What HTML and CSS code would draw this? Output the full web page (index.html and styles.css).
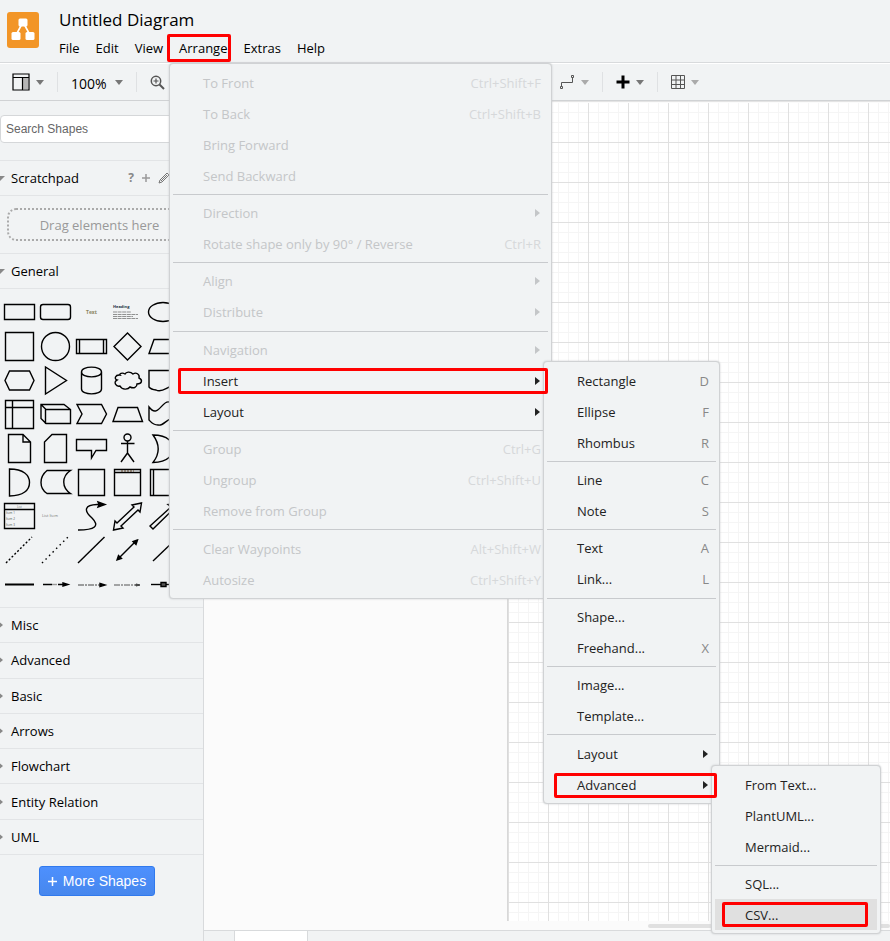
FILE: index.html
```html
<!DOCTYPE html>
<html lang="en">
<head>
<meta charset="utf-8">
<title>Untitled Diagram</title>
<link rel="stylesheet" href="styles.css">
</head>
<body>
<div class="app">
  <header class="header">
    <svg class="logo" viewBox="0 0 32 36" aria-hidden="true">
      <rect width="32" height="36" rx="3" fill="#f29527"/>
      <path d="M15.500 11 9 23M16.500 11 23 23" stroke="#fff" stroke-width="1.600"/>
      <rect x="11.500" y="6.500" width="9" height="8" rx="1.500" fill="#fff"/>
      <rect x="4.500" y="20" width="9" height="8" rx="1.500" fill="#fff"/>
      <rect x="18.500" y="20" width="9" height="8" rx="1.500" fill="#fff"/>
    </svg>
    <div class="heading">
      <h1 class="title">Untitled Diagram</h1>
      <nav class="menubar">
        <button>File</button><button>Edit</button><button>View</button><button>Arrange</button><button>Extras</button><button>Help</button>
      </nav>
    </div>
  </header>

  <div class="toolbar">
    <button class="tool" aria-label="View"><svg width="18" height="18" viewBox="0 0 18 18"><path d="M11 5h5v11h-5z" fill="#b5b5b5"/><path d="M1 1h16v16H1zM1 4.500h16M10.500 4.500V17" fill="none" stroke="#000" stroke-width="1.200"/></svg><i class="caret"></i></button>
    <i class="divider"></i>
    <button class="tool zoom"><span>100%</span><i class="caret"></i></button>
    <i class="divider"></i>
    <button class="tool" aria-label="Zoom in"><svg width="15" height="15" viewBox="0 0 15 15" fill="none" stroke="#555"><circle cx="6" cy="6" r="4.700" stroke-width="1.500"/><path d="M6 3.500v5M3.500 6h5" stroke-width="1.200"/><path d="m9.500 9.500 4.500 4.500" stroke-width="2"/></svg></button>
    <span class="tool-gap"></span>
    <button class="tool light" aria-label="Waypoints"><svg width="16" height="16" viewBox="0 0 16 16" fill="none" stroke="#555"><path d="M2.500 12V8.500h11V4"/><path d="M1.500 12.500h2v2h-2zM12.500 1.500h2v2h-2z"/></svg><i class="caret"></i></button>
    <i class="divider"></i>
    <button class="tool" aria-label="Insert"><svg width="14" height="14" viewBox="0 0 14 14"><path d="M7 .5v13M.5 7h13" stroke="#000" stroke-width="3"/></svg><i class="caret"></i></button>
    <i class="divider"></i>
    <button class="tool light" aria-label="Table"><svg width="14" height="14" viewBox="0 0 14 14" fill="none" stroke="#555"><path d="M.5.5h13v13H.5zM5 .5v13M9.500.5v13M.5 5h13M.5 9.500h13"/></svg><i class="caret"></i></button>
  </div>

  <div class="body">
    <aside class="sidebar">
      <div class="search"><input type="text" placeholder="Search Shapes" aria-label="Search Shapes"></div>
      <section class="panel">
        <h2 class="row down">Scratchpad
          <span class="actions"><b>?</b>
          <svg width="8" height="8" viewBox="0 0 8 8"><path d="M4 0v8M0 4h8" stroke="#999" stroke-width="1.500"/></svg>
          <svg width="12" height="12" viewBox="0 0 12 12" fill="none" stroke="#777"><path d="m1 11 1-3 7-7 2 2-7 7zM3 9l6-6"/></svg></span>
        </h2>
        <div class="scratch"><div class="drop">Drag elements here</div></div>
      </section>
      <section class="panel">
        <h2 class="row down">General</h2>
        <div class="shapes">
          <svg viewBox="0 0 36 34"><path d="M3.500 9.500h30v15h-30z"/></svg>
          <svg viewBox="0 0 36 34"><rect x="3.500" y="9.500" width="30" height="15" rx="2.500"/></svg>
          <svg viewBox="0 0 36 34"><text x="13" y="19" font-size="5" font-weight="700" fill="#8a8460">Text</text></svg>
          <svg viewBox="0 0 36 34"><text x="4" y="13" font-size="4" font-weight="700" fill="#234">Heading</text><path d="M4 17h18M4 19.500h25M4 21.500h20M4 23.500h25" stroke="#666" stroke-width=".7" stroke-dasharray="4 .6"/></svg>
          <svg viewBox="0 0 36 34"><ellipse cx="18" cy="17" rx="14.500" ry="9.500"/></svg>

          <svg viewBox="0 0 36 34"><path d="M4.500 3.500h28v28h-28z"/></svg>
          <svg viewBox="0 0 36 34"><circle cx="18.500" cy="17.500" r="14"/></svg>
          <svg viewBox="0 0 36 34"><path d="M3.500 10.500h30v14h-30zM6.500 10.500v14M30.500 10.500v14"/></svg>
          <svg viewBox="0 0 36 34"><path d="M18.500 4 32 17.500 18.500 31 5 17.500z"/></svg>
          <svg viewBox="0 0 36 34"><path d="M9 10.500h24l-5 14H4z"/></svg>

          <svg viewBox="0 0 36 34"><path d="M8.500 8h20l4.500 9.500-4.500 9.500h-20L4 17.500z"/></svg>
          <svg viewBox="0 0 36 34"><path d="M8.500 4v27l21-13.500z"/></svg>
          <svg viewBox="0 0 36 34"><path d="M8.500 9c0-6.500 20-6.500 20 0v17c0 6.500-20 6.500-20 0zM8.500 9c0 6.500 20 6.500 20 0"/></svg>
          <svg viewBox="0 0 36 34"><path d="M11 12c-5-.5-6 4-3 5-4 2-1 7 3 6 2 4 8 4 10 1 4 2 7 0 7-3 5 0 6-4 2-6 1-4-3-6-6-4-3-3-7-2-8 0-3-2-6 0-5 1z"/></svg>
          <svg viewBox="0 0 36 34"><path d="M4 7.500h29v17c-8-6-14 7-22 2.500Q6 26.500 4 24z"/></svg>

          <svg viewBox="0 0 36 34"><path d="M4.500 3.500h28v28h-28zM11.500 3.500v28M4.500 10.500h28"/></svg>
          <svg viewBox="0 0 36 34"><path d="M4 7.500h23l6.500 5v14H9l-5-5zM8.500 27V12.500h25M9 12.500 4 7.500"/></svg>
          <svg viewBox="0 0 36 34"><path d="M4 7.500h24.500l5 9.500-5 9.500H4L9 17z"/></svg>
          <svg viewBox="0 0 36 34"><path d="M9 10.500h19.500l5 14H4z"/></svg>
          <svg viewBox="0 0 36 34"><path d="M4 10c9 12 13-7 20-5l9 5v16c-9-11-13 4-20 2-5 0-7-3-9-5z"/></svg>

          <svg viewBox="0 0 36 34"><path d="M7.500 3.500H22l7.500 7.500v20.500h-22zM22 3.500V11h7.500"/></svg>
          <svg viewBox="0 0 36 34"><path d="M15 3.500h14.500v28h-22V11z"/></svg>
          <svg viewBox="0 0 36 34"><path d="M3.500 8.500h30v11H23L18.500 27v-7.500h-15z"/></svg>
          <svg viewBox="0 0 36 34"><circle cx="18.500" cy="6.500" r="3.500"/><path d="M18.500 10v12M12 12.500h13.500M18.500 22 12 31M18.500 22l6.500 9"/></svg>
          <svg viewBox="0 0 36 34"><path d="M8 4c16 0 20 8 20 13.500S24 31.500 8 31.500c7-9 7-18 0-27.500z"/></svg>

          <svg viewBox="0 0 36 34"><path d="M8.500 4c14 0 20 6 20 13.500s-6 13.500-20 13.500z"/></svg>
          <svg viewBox="0 0 36 34"><path d="M10 5.500h23.500c-9 6-9 17 0 23H10C2 23 2 12 10 5.500z"/></svg>
          <svg viewBox="0 0 36 34"><path d="M5.500 4.500h26v26h-26z"/></svg>
          <svg viewBox="0 0 36 34"><path d="M5.500 4.500h26v26h-26zM5.500 7.500h26"/><path d="M12 6h13" stroke="#765" stroke-dasharray="2 1"/></svg>
          <svg viewBox="0 0 36 34"><path d="M5.500 4.500h26v26h-26zM8.500 4.500v26"/></svg>

          <svg viewBox="0 0 36 34"><path d="M3.500 4.500h30v25h-30zM3.500 10.500h30"/><text x="16" y="9" font-size="3" fill="#777">List</text><text x="5" y="15" font-size="3" fill="#555">Item 1</text><text x="5" y="21" font-size="3" fill="#555">Item 2</text><text x="5" y="27" font-size="3" fill="#555">Item 3</text></svg>
          <svg viewBox="0 0 36 34"><text x="5" y="18" font-size="4" fill="#777">List Item</text></svg>
          <svg viewBox="0 0 36 34"><path d="M5 31c17 0 22-4 14-12-9-8-7-13 5-13.500h5"/><path d="m25 3 7 2.500-7 2.500 1-2.500z" fill="#000"/></svg>
          <svg viewBox="0 0 36 34"><path d="m4.500 31 1.500-9 2 2L25 8l-2-2 9.500-2L31 13l-2-2-17 16 2 2z"/></svg>
          <svg viewBox="0 0 36 34"><path d="m5 27 21-19-3-2.500 9.500-1-2 9L28 10.500 8 30z"/></svg>

          <svg viewBox="0 0 36 34"><path d="M5 30 31 4" stroke-dasharray="2 2"/></svg>
          <svg viewBox="0 0 36 34"><path d="M5 30 31 4" stroke-dasharray="1.500 3.500"/></svg>
          <svg viewBox="0 0 36 34"><path d="M5 30 31.500 4"/></svg>
          <svg viewBox="0 0 36 34"><path d="M9 26 27 8"/><path d="m8 27 1.500-4.500 3 3zM28.500 7l-4.500 1.500 3 3z" fill="#000"/></svg>
          <svg viewBox="0 0 36 34"><path d="M8 28 31 6"/></svg>

          <svg viewBox="0 0 36 34"><path d="M4 17.500h29" stroke-width="2"/></svg>
          <svg viewBox="0 0 36 34"><path d="M6 17.500h9M21 17.500h6"/><path d="M15 17.500h5" stroke="#999"/><path d="m26 16 5 1.500-5 1.500z" fill="#000"/></svg>
          <svg viewBox="0 0 36 34"><path d="M5 18h23" stroke="#444" stroke-width="1" stroke-dasharray="6 1 2 1"/><path d="m27 16.500 5 1.500-5 1.500z" fill="#000"/></svg>
          <svg viewBox="0 0 36 34"><path d="M5 18h23" stroke="#555" stroke-width="1" stroke-dasharray="6 1 2 1"/><path d="m27 17 4 1-4 1z" stroke="#333" stroke-width="1"/></svg>
          <svg viewBox="0 0 36 34"><path d="M6 17.500h24"/><path d="M16 15.500h5v4h-5z" fill="#555"/></svg>
        </div>
      </section>
      <nav class="libraries">
        <button class="row">Misc</button>
        <button class="row">Advanced</button>
        <button class="row">Basic</button>
        <button class="row">Arrows</button>
        <button class="row">Flowchart</button>
        <button class="row">Entity Relation</button>
        <button class="row">UML</button>
      </nav>
      <button class="more"><svg width="9" height="9" viewBox="0 0 9 9"><path d="M4.500 0v9M0 4.500h9" stroke="#fff" stroke-width="1.500"/></svg>More Shapes</button>
    </aside>
    <main class="stage">
      <div class="canvas"><div class="page"></div><i class="scroll"></i></div>
      <footer class="tabs"><i class="tab"></i></footer>
    </main>
  </div>
</div>

<div class="menu menu-arrange">
  <button class="item" disabled>To Front<kbd>Ctrl+Shift+F</kbd></button>
  <button class="item" disabled>To Back<kbd>Ctrl+Shift+B</kbd></button>
  <button class="item" disabled>Bring Forward</button>
  <button class="item" disabled>Send Backward</button>
  <hr>
  <button class="item sub" disabled>Direction</button>
  <button class="item" disabled>Rotate shape only by 90° / Reverse<kbd>Ctrl+R</kbd></button>
  <hr>
  <button class="item sub" disabled>Align</button>
  <button class="item sub" disabled>Distribute</button>
  <hr>
  <button class="item sub" disabled>Navigation</button>
  <button class="item sub">Insert</button>
  <button class="item sub">Layout</button>
  <hr>
  <button class="item" disabled>Group<kbd>Ctrl+G</kbd></button>
  <button class="item" disabled>Ungroup<kbd>Ctrl+Shift+U</kbd></button>
  <button class="item" disabled>Remove from Group</button>
  <hr>
  <button class="item" disabled>Clear Waypoints<kbd>Alt+Shift+W</kbd></button>
  <button class="item" disabled>Autosize<kbd>Ctrl+Shift+Y</kbd></button>
</div>

<div class="menu menu-insert">
  <button class="item">Rectangle<kbd>D</kbd></button>
  <button class="item">Ellipse<kbd>F</kbd></button>
  <button class="item">Rhombus<kbd>R</kbd></button>
  <hr>
  <button class="item">Line<kbd>C</kbd></button>
  <button class="item">Note<kbd>S</kbd></button>
  <hr>
  <button class="item">Text<kbd>A</kbd></button>
  <button class="item">Link...<kbd>L</kbd></button>
  <hr>
  <button class="item">Shape...</button>
  <button class="item">Freehand...<kbd>X</kbd></button>
  <hr>
  <button class="item">Image...</button>
  <button class="item">Template...</button>
  <hr>
  <button class="item sub">Layout</button>
  <button class="item sub">Advanced</button>
</div>

<div class="menu menu-advanced">
  <button class="item">From Text...</button>
  <button class="item">PlantUML...</button>
  <button class="item">Mermaid...</button>
  <hr>
  <button class="item">SQL...</button>
  <button class="item active">CSV...</button>
</div>

<i class="mark mark-arrange"></i>
<i class="mark mark-insert"></i>
<i class="mark mark-advanced"></i>
<i class="mark mark-csv"></i>
</body>
</html>
```
FILE: styles.css
```css
* { box-sizing: border-box; }

body {
  margin: 0;
  height: 100vh;
  overflow: hidden;
  background: #f1f3f4;
  color: #000;
  font: 13px/20px "Open Sans", "Noto Sans", sans-serif;
}

button {
  margin: 0;
  padding: 0;
  border: 0;
  background: none;
  color: inherit;
  font: inherit;
  text-align: left;
}

.app { display: flex; flex-direction: column; height: 100vh; }

.header {
  display: flex;
  gap: 20px;
  padding: 8px 7px 0;
  height: 63px;
  border-bottom: 1px solid #d8dadc;
}
.logo { width: 32px; height: 36px; margin-top: 4px; }
.title { margin: 0; font-size: 17px; font-weight: 400; line-height: 24px; }
.menubar { display: flex; gap: 16px; margin-top: 6px; }

.toolbar {
  display: flex;
  align-items: center;
  gap: 13px;
  height: 38px;
  padding: 0 12px;
  border-top: 1px solid #fff;
  border-bottom: 1px solid #d0d2d4;
}
.tool { display: flex; align-items: center; gap: 6px; }
.zoom { gap: 8px; font-size: 14px; }
.zoom span { padding-top: 3px; }
.tool-gap { width: 368px; }
.caret { border: 4px solid transparent; border-top: 5px solid #777; border-bottom: 0; }
.light .caret { border-top-color: #aaa; }
.divider { width: 1px; height: 20px; background: #dfe1e3; }

.body { display: flex; flex: 1; min-height: 0; }

.sidebar {
  width: 204px;
  flex: none;
  border-right: 1px solid #d8dadc;
}
.search { padding: 14px 12px 17px 0; border-bottom: 1px solid #e2e4e6; }
.search input {
  display: block;
  width: 100%;
  height: 28px;
  padding: 0 5px;
  border: 1px solid #d5d7d9;
  border-radius: 4px;
  background: #fff;
  font: 12px "Liberation Sans", Roboto, sans-serif;
}
.search input::placeholder { color: #666; }

.row {
  position: relative;
  display: flex;
  align-items: center;
  width: 100%;
  height: 35px;
  margin: 0;
  padding: 0 0 0 11px;
  border-bottom: 1px solid #e2e4e6;
  font-size: 13px;
  font-weight: 500;
}
.row::before {
  content: "";
  position: absolute;
  left: -2px;
  border: 4px solid transparent;
  border-left: 5px solid #888;
  border-right: 0;
}
.row.down::before {
  left: -5px;
  border: 5px solid transparent;
  border-top-color: #888;
  border-bottom: 0;
}
.actions { display: flex; align-items: center; gap: 8px; margin-left: auto; padding-right: 33px; color: #888; font-size: 12px; }
.scratch { padding: 12px 7px; border-bottom: 1px solid #e2e4e6; }
.drop {
  height: 33px;
  padding-right: 4px;
  border: 2px dotted #aaa;
  border-radius: 9px;
  color: #999;
  line-height: 30px;
  text-align: center;
}
.shapes {
  display: grid;
  grid-template-columns: repeat(5, 36px);
  grid-auto-rows: 34px;
  padding: 6px 0 6px 1px;
  border-bottom: 1px solid #e2e4e6;
}
.shapes svg { fill: none; stroke: #000; stroke-width: 1.4; }
.shapes text { stroke: none; font-family: "Open Sans", sans-serif; }
.libraries { display: grid; grid-auto-rows: 1fr; min-height: 247px; }
.libraries .row { height: auto; }

.more {
  display: flex;
  align-items: center;
  justify-content: center;
  gap: 6px;
  width: 116px;
  height: 30px;
  margin: 11px 0 0 39px;
  border: 1px solid #3079ed;
  border-radius: 3px;
  background: linear-gradient(#4d90fe, #4787ed);
  color: #fff;
  font: 14px "Liberation Sans", sans-serif;
}

.stage { display: flex; flex: 1; flex-direction: column; min-width: 0; }
.canvas {
  position: relative;
  flex: 1;
  padding: 1px 0 9px 303px;
  border-top: 1px solid #e4e4e4;
  background: #fbfbfb;
}
.page {
  height: 100%;
  border-left: 1px solid #d8d8d8;
  background-color: #fff;
  background-image:
    linear-gradient(90deg, #e0e0e0 1px, transparent 1px),
    linear-gradient(#e0e0e0 1px, transparent 1px),
    linear-gradient(90deg, #f5f5f5 1px, transparent 1px),
    linear-gradient(#f5f5f5 1px, transparent 1px);
  background-size: 40px 40px, 40px 40px, 10px 10px, 10px 10px;
  background-position: 0 39px;
}
.scroll { position: absolute; left: 444px; right: 0; bottom: 2px; height: 4px; border-radius: 2px; background: #e0e0e0; }
.tabs { height: 11px; padding-left: 30px; border-top: 1px solid #d8dadc; }
.tab { display: block; width: 74px; height: 10px; border: solid #d8dadc; border-width: 0 1px; background: #fff; }

.menu {
  position: absolute;
  display: flex;
  flex-direction: column;
  padding: 3px;
  border: 1px solid #d0d2d4;
  border-radius: 4px;
  background: #f1f3f4;
  box-shadow: 0 0 2px #c4c6c8;
}
.menu-arrange { left: 169px; top: 63px; width: 383px; height: 536px; }
.menu-insert { left: 543px; top: 361px; width: 177px; height: 443px; }
.menu-advanced { left: 711px; top: 765px; width: 170px; height: 169px; }
.menu hr { flex: 1; width: 100%; margin: 0; border: 0; background: linear-gradient(#c8cacd, #c8cacd) center / 100% 1px no-repeat; }
.item { display: flex; flex: none; align-items: center; height: 31px; padding: 0 7px 0 30px; color: #222; }
.item kbd { margin-left: auto; color: #888; font: inherit; }
.item:disabled { color: #c4c6c8; }
.item:disabled kbd { color: #d6d8da; }
.item.sub { padding-right: 8px; }
.item.sub::after { content: ""; margin-left: auto; border: 4px solid transparent; border-left: 5px solid; border-right: 0; }
.item.active { background: #e0e0e0; }

.mark { position: absolute; border: 3px solid #f00; border-radius: 2px; pointer-events: none; }
.mark-arrange { left: 167px; top: 34px; width: 64px; height: 28px; }
.mark-insert { left: 178px; top: 368px; width: 370px; height: 26px; }
.mark-advanced { left: 554px; top: 773px; width: 163px; height: 25px; }
.mark-csv { left: 722px; top: 902px; width: 146px; height: 25px; }
```
